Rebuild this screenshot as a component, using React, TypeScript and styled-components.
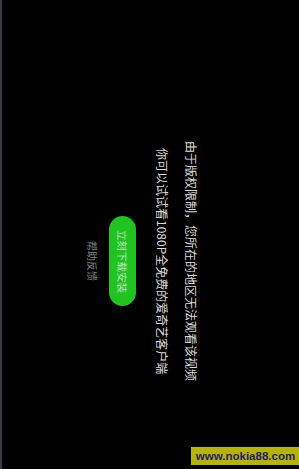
import React from "react";
import styled, { createGlobalStyle } from "styled-components";

const GlobalStyle = createGlobalStyle`
  html, body {
    margin: 0;
    padding: 0;
    background: #000;
  }
  body {
    font-family: "Noto Sans CJK SC", "Noto Sans", sans-serif;
  }
`;

const App: React.FC = () => {
  return (
    <>
      <GlobalStyle />
      <Screen>
        <Panel>
          <Message>由于版权限制，您所在的地区无法观看该视频</Message>
          <Message $second>你可以试试看1080P全免费的爱奇艺客户端</Message>
          <DownloadButton>立刻下载安装</DownloadButton>
          <HelpLink>帮助反馈</HelpLink>
        </Panel>
        <Watermark>www.nokia88.com</Watermark>
      </Screen>
    </>
  );
};

const Screen = styled.div`
  position: relative;
  box-sizing: border-box;
  width: 299px;
  height: 469px;
  background: #000;
  border-left: 2px solid #3a3e43;
  overflow: hidden;
  display: flex;
  justify-content: flex-end;
`;

const Panel = styled.div`
  writing-mode: vertical-rl;
  text-orientation: sideways;
  box-sizing: border-box;
  height: 469px;
  padding-top: 53px;
  padding-right: 100px;
  display: flex;
  flex-direction: column;
  align-items: center;
`;

const Message = styled.p<{ $second?: boolean }>`
  margin: 0;
  margin-block-start: ${(p) => (p.$second ? "13px" : "0")};
  font-size: 12px;
  line-height: 16px;
  color: #dcdcdc;
  white-space: nowrap;
`;

const DownloadButton = styled.button`
  margin-block-start: 18px;
  inline-size: 90px;
  block-size: 27px;
  padding: 0;
  border: none;
  border-radius: 14px;
  background: #20c320;
  color: #f2f2f2;
  font-family: "Noto Sans CJK SC", sans-serif;
  font-size: 10.5px;
  font-weight: 300;
  line-height: 27px;
  writing-mode: vertical-rl;
  text-orientation: sideways;
  cursor: pointer;
`;

const HelpLink = styled.span`
  margin-block-start: 10px;
  font-size: 10px;
  line-height: 14px;
  color: #858585;
`;

const Watermark = styled.div`
  position: absolute;
  left: 189px;
  top: 447px;
  width: 109px;
  height: 18px;
  background: #b7b300;
  color: #1d1b7c;
  font-family: "Liberation Sans", Arial, sans-serif;
  font-weight: bold;
  font-size: 11.5px;
  line-height: 18px;
  text-align: center;
`;

export default App;
